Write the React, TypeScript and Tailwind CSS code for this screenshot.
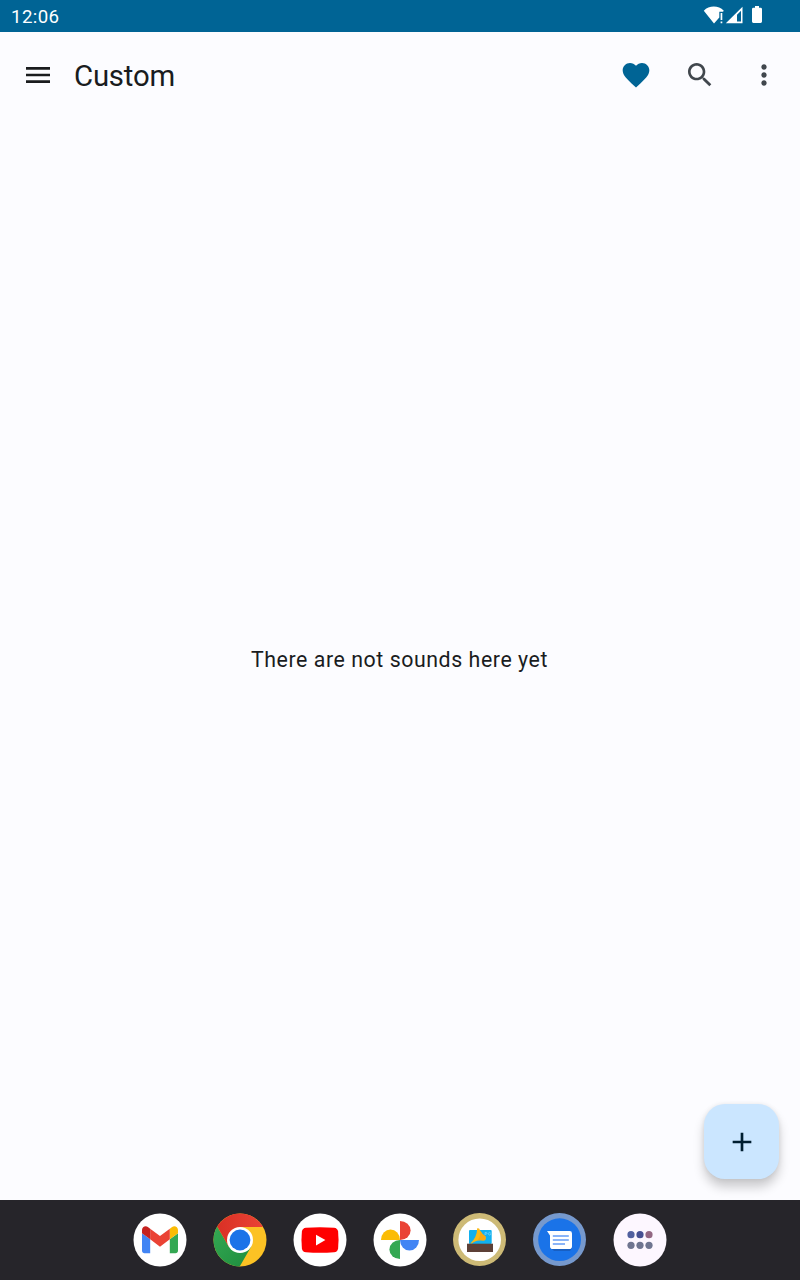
import type { ReactNode } from "react";

function DockIcon({ label, children }: { label: string; children: ReactNode }) {
  return (
    <button aria-label={label} className="size-[54px] shrink-0">
      <svg viewBox="0 0 54 54" className="block size-[54px]">
        {children}
      </svg>
    </button>
  );
}

function ActionIcon({ label, className, d }: { label: string; className: string; d: string }) {
  return (
    <button aria-label={label} className={`size-8 shrink-0 ${className}`}>
      <svg viewBox="0 0 24 24" className="block size-8" fill="currentColor">
        <path d={d} />
      </svg>
    </button>
  );
}

function StatusBar() {
  return (
    <header className="flex h-8 shrink-0 items-center justify-between bg-[#006495] pl-[11px] text-white">
      <span className="pt-px text-[18.67px] leading-8 tracking-[0.4px]">12:06</span>
      <svg viewBox="0 0 100 32" className="block h-8 w-[100px]" fill="#fff">
        <path d="M3.8 10.8C9 5.2 18.6 5.2 23.8 10.8L23 11.8H19.3V17.4L14 23.4Z" />
        <path d="M20.6 13h1.7v7h-1.7zM20.6 21.5h1.7v1.7h-1.7z" />
        <path fillRule="evenodd" d="M25.8 23.2 42.5 6.7V23.2ZM37 14.7V21.6H41V10.8Z" />
        <path d="M52 9.2q0-1.4 1.4-1.4H55V6h4v1.8h1.6q1.4 0 1.4 1.4v12.4q0 1.4-1.4 1.4h-7.2q-1.4 0-1.4-1.4Z" />
      </svg>
    </header>
  );
}

function Toolbar() {
  return (
    <div className="flex h-[86px] shrink-0 items-center pr-5 pl-[22px]">
      <ActionIcon label="Menu" className="text-[#1a1c1e]" d="M3 18h18v-2H3v2zm0-5h18v-2H3v2zm0-7v2h18V6H3z" />
      <h1 className="ml-5 pt-[2px] text-[29.33px] leading-9 tracking-[-0.2px] text-[#1a1c1e]">Custom</h1>
      <div className="ml-auto flex gap-8">
        <ActionIcon
          label="Favorites"
          className="text-[#006495]"
          d="M12 21.35l-1.45-1.32C5.4 15.36 2 12.28 2 8.5 2 5.42 4.42 3 7.5 3c1.74 0 3.41.81 4.5 2.09C13.09 3.81 14.76 3 16.5 3 19.58 3 22 5.42 22 8.5c0 3.78-3.4 6.86-8.55 11.54L12 21.35z"
        />
        <ActionIcon
          label="Search"
          className="text-[#41474d]"
          d="M15.5 14h-.79l-.28-.27C15.41 12.59 16 11.11 16 9.5 16 5.91 13.09 3 9.5 3S3 5.91 3 9.5 5.91 16 9.5 16c1.61 0 3.09-.59 4.23-1.57l.27.28v.79l5 4.99L20.49 19l-4.99-5zm-6 0C7.01 14 5 11.99 5 9.5S7.01 5 9.5 5 14 7.01 14 9.5 11.99 14 9.5 14z"
        />
        <ActionIcon
          label="More options"
          className="text-[#41474d]"
          d="M12 8c1.1 0 2-.9 2-2s-.9-2-2-2-2 .9-2 2 .9 2 2 2zm0 2c-1.1 0-2 .9-2 2s.9 2 2 2 2-.9 2-2-.9-2-2-2zm0 6c-1.1 0-2 .9-2 2s.9 2 2 2 2-.9 2-2-.9-2-2-2z"
        />
      </div>
    </div>
  );
}

function Dock() {
  return (
    <nav className="flex h-20 shrink-0 items-center justify-center gap-[26px] bg-[#26252a]">
      <DockIcon label="Gmail">
        <circle cx="27" cy="27" r="26.5" fill="#fff" />
        <g transform="translate(9 13.2) scale(.409) translate(-52 -42)">
          <path fill="#4285f4" d="M58 108h14V74L52 59v43c0 3.32 2.69 6 6 6" />
          <path fill="#34a853" d="M120 108h14c3.32 0 6-2.69 6-6V59l-20 15" />
          <path fill="#fbbc04" d="M120 48v26l20-15v-8c0-7.42-8.47-11.65-14.4-7.2" />
          <path fill="#ea4335" d="M72 74V48l24 18 24-18v26L96 92" />
          <path fill="#c5221f" d="M52 51v8l20 15V48l-5.6-4.2c-5.94-4.45-14.4-.22-14.4 7.2" />
        </g>
      </DockIcon>
      <DockIcon label="Chrome">
        <defs>
          <linearGradient id="chromeRed">
            <stop stopColor="#d93025" />
            <stop offset="1" stopColor="#ea4335" />
          </linearGradient>
          <linearGradient id="chromeGreen" x1="1" y1="1" x2="0" y2="0">
            <stop stopColor="#1e8e3e" />
            <stop offset="1" stopColor="#34a853" />
          </linearGradient>
        </defs>
        <circle cx="27" cy="27" r="26.5" fill="#fcc224" />
        <path fill="url(#chromeGreen)" d="M4.2 13.5A26.5 26.5 0 0 0 26.7 53.5L38.26 33.5 27 27 15.74 33.5Z" />
        <path fill="url(#chromeRed)" d="M4.2 13.5A26.5 26.5 0 0 1 50.1 14H27V27L15.74 33.5Z" />
        <circle cx="27" cy="27" r="13" fill="#fff" />
        <circle cx="27" cy="27" r="10.4" fill="#1a73e8" />
      </DockIcon>
      <DockIcon label="YouTube">
        <circle cx="27" cy="27" r="26.5" fill="#fff" />
        <path
          fill="#f00"
          d="M13 14.7Q27 13.7 41 14.7Q44.6 15 45.1 18.6Q46 27 45.1 35.4Q44.6 39 41 39.3Q27 40.3 13 39.3Q9.4 39 8.9 35.4Q8 27 8.9 18.6Q9.4 15 13 14.7Z"
        />
        <path fill="#fff" d="M23 21.7 32.4 27 23 32.4Z" />
      </DockIcon>
      <DockIcon label="Photos">
        <circle cx="27" cy="27" r="26.5" fill="#fff" />
        <path fill="#ea4335" d="M27 8A10.6 9.5 0 0 1 27 27Z" />
        <path fill="#4285f4" d="M46 27A9.5 10.6 0 0 1 27 27Z" />
        <path fill="#34a853" d="M27 46A10.6 9.5 0 0 1 27 27Z" />
        <path fill="#fbbc04" d="M8 27A9.5 10.6 0 0 1 27 27Z" />
      </DockIcon>
      <DockIcon label="Gramophone">
        <circle cx="26.5" cy="26.5" r="26.5" fill="#cdba76" />
        <circle cx="26.7" cy="26.7" r="21.3" fill="#fff" />
        <rect x="16" y="17" width="22.7" height="14" rx="1" fill="#12b0ee" />
        <path d="M32 22V19.5h1.2a.8.8 0 0 1 0 1.6H32M37.6 19.8a1.3 1.3 0 1 0 0 1.8v-.8h-.8" fill="none" stroke="#8fdcfa" strokeWidth=".6" />
        <path fill="#fbb917" d="M24.2 15.3Q26.5 14.5 27 17.5Q28.8 21 32.6 23.4Q33.2 27.2 30.6 27.4Q23 26.3 18.6 30.7H17.2Q24 24.5 24.2 15.3Z" />
        <path fill="#f9a80f" d="M27 17.5Q28.8 21 32.6 23.4Q33.2 27.2 30.6 27.4Q27.4 27 24.6 27.3Q28 24 27 17.5Z" />
        <rect x="14" y="30.7" width="26" height="8.3" fill="#5d4037" />
      </DockIcon>
      <DockIcon label="Messages">
        <circle cx="26.5" cy="26.5" r="26.5" fill="#7699cd" />
        <circle cx="26.6" cy="26.7" r="21.4" fill="#1a73e8" />
        <path d="M17 34L21 38H37L39 35" fill="#185fc2" />
        <path fill="#fff" d="M14 18H36.6Q39 18 39 20.4V33.2Q39 36 36.2 36H19.8Q17 36 17 33.2V22.6Z" />
        <path d="M19.8 22.9H35.8M19.8 27.1H35.8M19.8 31.1H32" stroke="#8ab4f8" strokeWidth="2" fill="none" />
      </DockIcon>
      <DockIcon label="All apps">
        <circle cx="27" cy="27" r="26.5" fill="#fdf7ff" />
        <g fill="#6f7590">
          <circle cx="18" cy="21.7" r="3.6" fill="#51609f" />
          <circle cx="27" cy="21.7" r="3.6" fill="#465092" />
          <circle cx="36" cy="21.7" r="3.6" fill="#936783" />
          <circle cx="18" cy="32.3" r="3.6" />
          <circle cx="27" cy="32.3" r="3.6" />
          <circle cx="36" cy="32.3" r="3.6" />
        </g>
      </DockIcon>
    </nav>
  );
}

export default function App() {
  return (
    <div className="flex h-[1280px] w-[800px] flex-col overflow-hidden bg-[#fcfcff] font-[Roboto,sans-serif]">
      <StatusBar />
      <Toolbar />
      <main className="relative flex flex-1 items-center justify-center">
        <p className="pt-[2px] pr-px text-[21.33px] leading-8 tracking-[0.56px] text-[#1a1c1e]">There are not sounds here yet</p>
        <button
          aria-label="Add sound"
          className="absolute right-[21px] bottom-[21px] flex size-[75px] items-center justify-center rounded-[21px] bg-[#cbe6ff] text-[#001e30] shadow-[0_8px_11px_rgba(0,0,0,0.2),0_0_5px_rgba(0,0,0,0.08)]"
        >
          <svg viewBox="0 0 24 24" className="block size-8" fill="currentColor">
            <path d="M19 13h-6v6h-2v-6H5v-2h6V5h2v6h6v2z" />
          </svg>
        </button>
      </main>
      <Dock />
    </div>
  );
}
